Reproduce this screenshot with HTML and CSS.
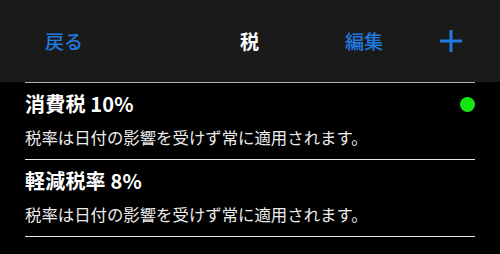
FILE: index.html
```html
<!DOCTYPE html>
<html lang="ja">
<head>
<meta charset="utf-8">
<link rel="stylesheet" href="styles.css">
</head>
<body>
<header class="nav">
  <span class="nav-btn back">戻る</span>
  <span class="nav-title">税</span>
  <span class="nav-btn edit">編集</span>
  <span class="nav-add">
    <svg width="22" height="22" viewBox="0 0 22 22"><path d="M11 0V22M0 11H22" stroke="#1f7be0" stroke-width="3"/></svg>
  </span>
</header>
<ul class="list">
  <li class="row">
    <div class="row-head">
      <span class="row-title">消費税 10%</span>
      <span class="dot"></span>
    </div>
    <div class="row-sub">税率は日付の影響を受けず常に適用されます。</div>
  </li>
  <li class="row">
    <div class="row-head">
      <span class="row-title">軽減税率 8%</span>
    </div>
    <div class="row-sub">税率は日付の影響を受けず常に適用されます。</div>
  </li>
</ul>
</body>
</html>
```
FILE: styles.css
```css
html, body {
  margin: 0;
  padding: 0;
  background: #000;
  font-family: "Noto Sans CJK JP", "Noto Sans", sans-serif;
  color: #fff;
}
.nav {
  height: 82px;
  background: #1a1a1a;
  display: flex;
  align-items: center;
  padding: 0 0 0 45px;
  box-sizing: border-box;
}
.nav-btn {
  color: #1f7be0;
  font-size: 19px;
  font-weight: 500;
  line-height: 24px;
}
.nav-title {
  font-size: 19px;
  font-weight: 700;
  line-height: 24px;
  margin-left: 157px;
}
.edit {
  margin-left: 86px;
}
.nav-add {
  margin-left: 57px;
  display: flex;
}
.list {
  list-style: none;
  margin: 0 25px;
  padding: 0;
  border-top: 1px solid #b4b4b4;
}
.row {
  border-bottom: 1px solid #e6e6e6;
  padding: 8px 0 11px;
}
.row-head {
  display: flex;
  align-items: center;
  justify-content: space-between;
  height: 26px;
}
.row-title {
  font-size: 20px;
  font-weight: 700;
  line-height: 26px;
  letter-spacing: 0.2px;
}
.dot {
  width: 15px;
  height: 15px;
  border-radius: 50%;
  background: #14e614;
}
.row-sub {
  margin-top: 9px;
  font-size: 16.4px;
  font-weight: 400;
  line-height: 22px;
  color: #eee;
}
```
